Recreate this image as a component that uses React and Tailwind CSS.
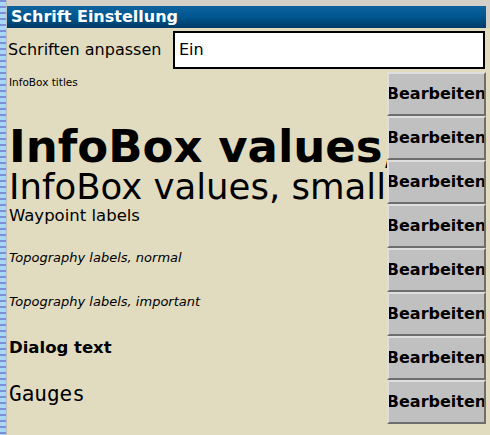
import React from 'react';

const labels = [
    { text: 'InfoBox titles', cls: 'mt-[5px] h-[47px] text-[10.5px]' },
    { text: 'InfoBox values, no', cls: 'h-[45px] text-[45px] font-bold' },
    { text: 'InfoBox values, small', cls: 'h-[39px] text-[35.5px]' },
    { text: 'Waypoint labels', cls: 'h-[43px] text-[16.5px]' },
    { text: 'Topography labels, normal', cls: 'h-[44px] text-[13px] italic' },
    { text: 'Topography labels, important', cls: 'h-[45px] text-[13px] italic' },
    { text: 'Dialog text', cls: 'h-[44px] text-[16.5px] font-bold' },
    { text: 'Gauges', cls: 'h-[30px] text-[21px] font-["DejaVu_Sans_Mono",monospace]' },
];

const EditButton = () => (
    <button className="h-[44px] w-full shrink-0 flex items-center justify-center overflow-hidden bg-[#c0c0c0] border-2 border-t-[#dedede] border-l-[#dedede] border-b-[#6e6e6e] border-r-[#6e6e6e] text-[16px] font-bold text-black leading-none">
        Bearbeiten
    </button>
);

export default function App() {
    return (
        <div className="w-[490px] h-[435px] flex overflow-hidden font-['DejaVu_Sans',sans-serif] text-black">
            {/* desktop edge */}
            <div className="w-[7px] shrink-0 flex">
                <div className="w-[6px] bg-[#92c9ee] bg-[repeating-linear-gradient(180deg,#7d8fd6_0px,#7d8fd6_2px,#a8d8f6_2px,#a8d8f6_6px)]" />
                <div className="w-[1px] bg-[#bdbdbd]" />
            </div>

            <div className="flex-1 min-w-0 flex flex-col">
                <div className="h-[6px] bg-[#d4d0c8]" />
                <div className="h-[22px] flex">
                    <div className="flex-1 flex items-center pl-[4px] bg-gradient-to-b from-[#0c639e] via-[#00568f] to-[#003a66]">
                        <span className="text-white font-bold text-[16px] leading-none">Schrift Einstellung</span>
                    </div>
                    <div className="w-[4px] shrink-0 bg-[#d4d0c8]" />
                </div>

                <div className="flex-1 flex flex-col bg-[#e1dcc0]">
                    <div className="h-[44px] flex items-center">
                        <span className="pl-[1px] text-[16px] leading-none whitespace-nowrap">Schriften anpassen</span>
                        <div className="ml-auto mr-[5px] shrink-0 w-[312px] h-[38px] bg-white border-2 border-black flex items-center pl-[4px]">
                            <span className="text-[16px] leading-none">Ein</span>
                        </div>
                    </div>

                    <div className="flex-1 flex">
                        <div className="flex-1 min-w-0 flex flex-col pl-[2px] whitespace-nowrap">
                            {labels.map(l => (
                                <div key={l.text} className={`leading-none ${l.cls}`}>{l.text}</div>
                            ))}
                        </div>
                        <div className="relative z-10 shrink-0 w-[99px] mr-[4px] flex flex-col">
                            {Array.from({ length: 8 }).map((_, i) => (
                                <EditButton key={i} />
                            ))}
                        </div>
                    </div>
                </div>
            </div>
        </div>
    );
}
